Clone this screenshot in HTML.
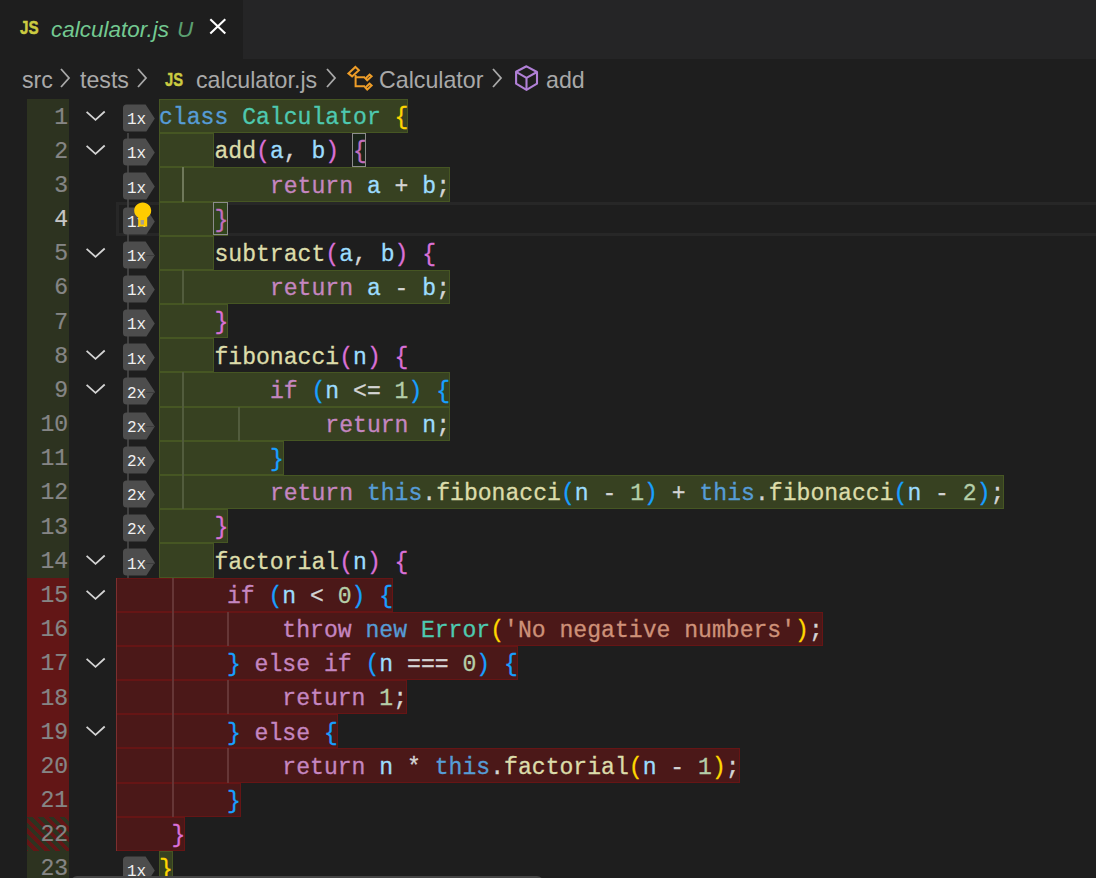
<!DOCTYPE html>
<html><head><meta charset="utf-8"><style>
html,body{margin:0;padding:0;}
body{width:1096px;height:878px;overflow:hidden;background:#1e1e1e;position:relative;font-family:"Liberation Sans",sans-serif;}
.a{position:absolute;}
.code{position:absolute;white-space:pre;font-family:"Liberation Mono",monospace;font-size:23.1px;line-height:34.18px;height:34.18px;-webkit-text-stroke:0.3px;}
.ln{position:absolute;left:0;width:68.2px;-webkit-text-stroke:0.2px;text-align:right;font-family:"Liberation Mono",monospace;font-size:23.1px;line-height:34.18px;color:#858585;}
.gb{position:absolute;left:27px;width:42px;}
.cg{background:#374121;border:1px solid #465623;box-sizing:border-box;}
.cr{background:#4b1818;border:1px solid #661515;box-sizing:border-box;}
.bd{position:absolute;left:123px;width:33px;height:28px;}
.bt{position:absolute;left:127px;font-family:"Liberation Mono",monospace;font-size:16px;color:#f0f0f0;line-height:28px;}
.bc{position:absolute;font-family:"Liberation Sans",sans-serif;font-size:23.2px;color:#a9a9a9;white-space:pre;line-height:40px;top:60px;}
</style></head><body>

<div class="a" style="left:0;top:0;width:1096px;height:59px;background:#252526"></div>
<div class="a" style="left:0;top:0;width:243px;height:59px;background:#1e1e1e"></div>
<div class="a" style="left:19.5px;top:16px;font-weight:bold;font-size:19px;color:#cbcb41;line-height:24px;transform:scaleX(0.8);transform-origin:0 0;-webkit-text-stroke:0.5px #cbcb41">JS</div>
<div class="a" style="left:51px;top:13.5px;font-style:italic;font-size:22.5px;color:#73c991;line-height:32px">calculator.js</div>
<div class="a" style="left:177px;top:13.5px;font-style:italic;font-size:22.5px;color:#5b9f70;line-height:32px">U</div>
<svg class="a" style="left:205px;top:13px" width="28" height="28" viewBox="0 0 28 28"><path d="M5.3 6.3 L20.3 20.5 M20.3 6.3 L5.3 20.5" stroke="#ffffff" stroke-width="2.1" fill="none"/></svg>
<div class="bc" style="left:22px">src</div>
<svg class="a" style="left:59px;top:66px" width="14" height="24" viewBox="0 0 14 24"><path d="M2 3 L10 12 L2 21" stroke="#a9a9a9" stroke-width="1.8" fill="none"/></svg>
<div class="bc" style="left:80px">tests</div>
<svg class="a" style="left:136px;top:66px" width="14" height="24" viewBox="0 0 14 24"><path d="M2 3 L10 12 L2 21" stroke="#a9a9a9" stroke-width="1.8" fill="none"/></svg>
<div class="a" style="left:165px;top:67.5px;font-weight:bold;font-size:18px;color:#cbcb41;line-height:24px;transform:scaleX(0.82);transform-origin:0 0;-webkit-text-stroke:0.4px #cbcb41">JS</div>
<div class="bc" style="left:196px">calculator.js</div>
<svg class="a" style="left:325px;top:66px" width="14" height="24" viewBox="0 0 14 24"><path d="M2 3 L10 12 L2 21" stroke="#a9a9a9" stroke-width="1.8" fill="none"/></svg>
<svg class="a" style="left:344px;top:63px" width="32" height="32" viewBox="0 0 32 32"><g fill="none" stroke="#ee9d28" stroke-width="2" stroke-linejoin="miter"><path d="M4.4 10.4 L11.4 3.9 L14.9 7.2 L8.1 13.4 Z"/><path d="M11.6 12 L11.6 23.2 L21 23.2 M11.6 14.2 L21 14.2"/><path d="M21.4 15.4 L25.6 11.5 L27.6 13.3 L23.2 17.3 Z"/><path d="M21.4 24.6 L25.6 20.7 L27.6 22.5 L23.2 26.5 Z"/></g></svg>
<div class="bc" style="left:379px">Calculator</div>
<svg class="a" style="left:491px;top:66px" width="14" height="24" viewBox="0 0 14 24"><path d="M2 3 L10 12 L2 21" stroke="#a9a9a9" stroke-width="1.8" fill="none"/></svg>
<svg class="a" style="left:510px;top:62px" width="32" height="32" viewBox="0 0 32 32"><g fill="none" stroke="#b180d7" stroke-width="2.1" stroke-linejoin="round"><path d="M16.5 4.3 L27 10 L27 21.7 L16.5 27.9 L6.1 21.7 L6.1 9.8 Z"/><path d="M6.1 9.8 L16.5 15.8 L27 10 M16.5 15.8 L16.5 27.9"/></g></svg>
<div class="bc" style="left:546px">add</div>
<div class="gb" style="top:99.00px;height:34.18px;background:#2d3320"></div>
<div class="gb" style="top:133.18px;height:34.18px;background:#2d3320"></div>
<div class="gb" style="top:167.36px;height:34.18px;background:#2d3320"></div>
<div class="gb" style="top:201.54px;height:34.18px;background:#2d3320"></div>
<div class="gb" style="top:235.72px;height:34.18px;background:#2d3320"></div>
<div class="gb" style="top:269.90px;height:34.18px;background:#2d3320"></div>
<div class="gb" style="top:304.08px;height:34.18px;background:#2d3320"></div>
<div class="gb" style="top:338.26px;height:34.18px;background:#2d3320"></div>
<div class="gb" style="top:372.44px;height:34.18px;background:#2d3320"></div>
<div class="gb" style="top:406.62px;height:34.18px;background:#2d3320"></div>
<div class="gb" style="top:440.80px;height:34.18px;background:#2d3320"></div>
<div class="gb" style="top:474.98px;height:34.18px;background:#2d3320"></div>
<div class="gb" style="top:509.16px;height:34.18px;background:#2d3320"></div>
<div class="gb" style="top:543.34px;height:34.18px;background:#2d3320"></div>
<div class="gb" style="top:577.52px;height:34.18px;background:#621616"></div>
<div class="gb" style="top:611.70px;height:34.18px;background:#621616"></div>
<div class="gb" style="top:645.88px;height:34.18px;background:#621616"></div>
<div class="gb" style="top:680.06px;height:34.18px;background:#621616"></div>
<div class="gb" style="top:714.24px;height:34.18px;background:#621616"></div>
<div class="gb" style="top:748.42px;height:34.18px;background:#621616"></div>
<div class="gb" style="top:782.60px;height:34.18px;background:#621616"></div>
<div class="gb" style="top:816.78px;height:34.18px;background:repeating-linear-gradient(45deg,#621616 0px,#621616 0.99px,#2d3320 0.99px,#2d3320 4.81px,#621616 4.81px,#621616 7.64px)"></div>
<div class="gb" style="top:850.96px;height:34.18px;background:#2d3320"></div>
<div class="a" style="left:116px;top:201.54px;width:980px;height:28.68px;border:3px solid #272727;border-right:none"></div>
<div class="ln" style="top:100.50px;color:#858585">1</div>
<div class="ln" style="top:134.68px;color:#858585">2</div>
<div class="ln" style="top:168.86px;color:#858585">3</div>
<div class="ln" style="top:203.04px;color:#c6c6c6">4</div>
<div class="ln" style="top:237.22px;color:#858585">5</div>
<div class="ln" style="top:271.40px;color:#858585">6</div>
<div class="ln" style="top:305.58px;color:#858585">7</div>
<div class="ln" style="top:339.76px;color:#858585">8</div>
<div class="ln" style="top:373.94px;color:#858585">9</div>
<div class="ln" style="top:408.12px;color:#858585">10</div>
<div class="ln" style="top:442.30px;color:#858585">11</div>
<div class="ln" style="top:476.48px;color:#858585">12</div>
<div class="ln" style="top:510.66px;color:#858585">13</div>
<div class="ln" style="top:544.84px;color:#858585">14</div>
<div class="ln" style="top:579.02px;color:#858585">15</div>
<div class="ln" style="top:613.20px;color:#858585">16</div>
<div class="ln" style="top:647.38px;color:#858585">17</div>
<div class="ln" style="top:681.56px;color:#858585">18</div>
<div class="ln" style="top:715.74px;color:#858585">19</div>
<div class="ln" style="top:749.92px;color:#858585">20</div>
<div class="ln" style="top:784.10px;color:#858585">21</div>
<div class="ln" style="top:818.28px;color:#858585">22</div>
<div class="ln" style="top:852.46px;color:#858585">23</div>
<svg class="a" style="left:82px;top:99.00px" width="28" height="34" viewBox="0 0 28 34"><path d="M4.6 12.9 L13.5 20.8 L22.7 12.5" stroke="#d4d4d4" stroke-width="1.8" fill="none"/></svg>
<svg class="a" style="left:82px;top:133.18px" width="28" height="34" viewBox="0 0 28 34"><path d="M4.6 12.9 L13.5 20.8 L22.7 12.5" stroke="#d4d4d4" stroke-width="1.8" fill="none"/></svg>
<svg class="a" style="left:82px;top:235.72px" width="28" height="34" viewBox="0 0 28 34"><path d="M4.6 12.9 L13.5 20.8 L22.7 12.5" stroke="#d4d4d4" stroke-width="1.8" fill="none"/></svg>
<svg class="a" style="left:82px;top:338.26px" width="28" height="34" viewBox="0 0 28 34"><path d="M4.6 12.9 L13.5 20.8 L22.7 12.5" stroke="#d4d4d4" stroke-width="1.8" fill="none"/></svg>
<svg class="a" style="left:82px;top:372.44px" width="28" height="34" viewBox="0 0 28 34"><path d="M4.6 12.9 L13.5 20.8 L22.7 12.5" stroke="#d4d4d4" stroke-width="1.8" fill="none"/></svg>
<svg class="a" style="left:82px;top:543.34px" width="28" height="34" viewBox="0 0 28 34"><path d="M4.6 12.9 L13.5 20.8 L22.7 12.5" stroke="#d4d4d4" stroke-width="1.8" fill="none"/></svg>
<svg class="a" style="left:82px;top:577.52px" width="28" height="34" viewBox="0 0 28 34"><path d="M4.6 12.9 L13.5 20.8 L22.7 12.5" stroke="#d4d4d4" stroke-width="1.8" fill="none"/></svg>
<svg class="a" style="left:82px;top:645.88px" width="28" height="34" viewBox="0 0 28 34"><path d="M4.6 12.9 L13.5 20.8 L22.7 12.5" stroke="#d4d4d4" stroke-width="1.8" fill="none"/></svg>
<svg class="a" style="left:82px;top:714.24px" width="28" height="34" viewBox="0 0 28 34"><path d="M4.6 12.9 L13.5 20.8 L22.7 12.5" stroke="#d4d4d4" stroke-width="1.8" fill="none"/></svg>
<div class="a" style="left:183.4px;top:167.36px;width:2px;height:34.18px;background:#707070;opacity:0.8"></div>
<div class="a" style="left:183.4px;top:269.90px;width:2px;height:34.18px;background:#404040;opacity:0.8"></div>
<div class="a" style="left:183.4px;top:372.44px;width:2px;height:34.18px;background:#404040;opacity:0.8"></div>
<div class="a" style="left:183.4px;top:406.62px;width:2px;height:34.18px;background:#404040;opacity:0.8"></div>
<div class="a" style="left:238.9px;top:406.62px;width:2px;height:34.18px;background:#404040;opacity:0.8"></div>
<div class="a" style="left:183.4px;top:440.80px;width:2px;height:34.18px;background:#404040;opacity:0.8"></div>
<div class="a" style="left:183.4px;top:474.98px;width:2px;height:34.18px;background:#404040;opacity:0.8"></div>
<div class="a" style="left:116.0px;top:577.52px;width:2px;height:34.18px;background:#404040;opacity:0.8"></div>
<div class="a" style="left:171.4px;top:577.52px;width:2px;height:34.18px;background:#404040;opacity:0.8"></div>
<div class="a" style="left:116.0px;top:611.70px;width:2px;height:34.18px;background:#404040;opacity:0.8"></div>
<div class="a" style="left:171.4px;top:611.70px;width:2px;height:34.18px;background:#404040;opacity:0.8"></div>
<div class="a" style="left:226.9px;top:611.70px;width:2px;height:34.18px;background:#404040;opacity:0.8"></div>
<div class="a" style="left:116.0px;top:645.88px;width:2px;height:34.18px;background:#404040;opacity:0.8"></div>
<div class="a" style="left:171.4px;top:645.88px;width:2px;height:34.18px;background:#404040;opacity:0.8"></div>
<div class="a" style="left:116.0px;top:680.06px;width:2px;height:34.18px;background:#404040;opacity:0.8"></div>
<div class="a" style="left:171.4px;top:680.06px;width:2px;height:34.18px;background:#404040;opacity:0.8"></div>
<div class="a" style="left:226.9px;top:680.06px;width:2px;height:34.18px;background:#404040;opacity:0.8"></div>
<div class="a" style="left:116.0px;top:714.24px;width:2px;height:34.18px;background:#404040;opacity:0.8"></div>
<div class="a" style="left:171.4px;top:714.24px;width:2px;height:34.18px;background:#404040;opacity:0.8"></div>
<div class="a" style="left:116.0px;top:748.42px;width:2px;height:34.18px;background:#404040;opacity:0.8"></div>
<div class="a" style="left:171.4px;top:748.42px;width:2px;height:34.18px;background:#404040;opacity:0.8"></div>
<div class="a" style="left:226.9px;top:748.42px;width:2px;height:34.18px;background:#404040;opacity:0.8"></div>
<div class="a" style="left:116.0px;top:782.60px;width:2px;height:34.18px;background:#404040;opacity:0.8"></div>
<div class="a" style="left:171.4px;top:782.60px;width:2px;height:34.18px;background:#404040;opacity:0.8"></div>
<div class="a" style="left:116.0px;top:816.78px;width:2px;height:34.18px;background:#404040;opacity:0.8"></div>
<div class="a" style="left:126.7px;top:133.18px;width:2px;height:444.34px;background:#404040"></div>
<div class="a cg" style="left:159.00px;top:99.00px;width:249.48px;height:34.18px"></div>
<div class="a cg" style="left:159.00px;top:133.18px;width:55.44px;height:34.18px"></div>
<div class="a cg" style="left:159.00px;top:167.36px;width:291.06px;height:34.18px"></div>
<div class="a cg" style="left:159.00px;top:201.54px;width:69.30px;height:34.18px"></div>
<div class="a cg" style="left:159.00px;top:235.72px;width:55.44px;height:34.18px"></div>
<div class="a cg" style="left:159.00px;top:269.90px;width:291.06px;height:34.18px"></div>
<div class="a cg" style="left:159.00px;top:304.08px;width:69.30px;height:34.18px"></div>
<div class="a cg" style="left:159.00px;top:338.26px;width:55.44px;height:34.18px"></div>
<div class="a cg" style="left:159.00px;top:372.44px;width:291.06px;height:34.18px"></div>
<div class="a cg" style="left:159.00px;top:406.62px;width:291.06px;height:34.18px"></div>
<div class="a cg" style="left:159.00px;top:440.80px;width:124.74px;height:34.18px"></div>
<div class="a cg" style="left:159.00px;top:474.98px;width:845.46px;height:34.18px"></div>
<div class="a cg" style="left:159.00px;top:509.16px;width:69.30px;height:34.18px"></div>
<div class="a cg" style="left:159.00px;top:543.34px;width:55.44px;height:34.18px"></div>
<div class="a cr" style="left:116.00px;top:577.52px;width:277.20px;height:34.18px"></div>
<div class="a cr" style="left:116.00px;top:611.70px;width:706.86px;height:34.18px"></div>
<div class="a cr" style="left:116.00px;top:645.88px;width:401.94px;height:34.18px"></div>
<div class="a cr" style="left:116.00px;top:680.06px;width:291.06px;height:34.18px"></div>
<div class="a cr" style="left:116.00px;top:714.24px;width:221.76px;height:34.18px"></div>
<div class="a cr" style="left:116.00px;top:748.42px;width:623.70px;height:34.18px"></div>
<div class="a cr" style="left:116.00px;top:782.60px;width:124.74px;height:34.18px"></div>
<div class="a cr" style="left:116.00px;top:816.78px;width:69.30px;height:34.18px"></div>
<div class="a cg" style="left:159.00px;top:850.96px;width:13.86px;height:34.18px"></div>
<div class="a" style="left:182.0px;top:167.36px;width:2px;height:34.18px;background:#6f785a"></div>
<div class="a" style="left:182.0px;top:269.90px;width:2px;height:34.18px;background:#525c3d"></div>
<div class="a" style="left:182.0px;top:372.44px;width:2px;height:34.18px;background:#525c3d"></div>
<div class="a" style="left:182.0px;top:406.62px;width:2px;height:34.18px;background:#525c3d"></div>
<div class="a" style="left:238.0px;top:406.62px;width:2px;height:34.18px;background:#525c3d"></div>
<div class="a" style="left:182.0px;top:440.80px;width:2px;height:34.18px;background:#525c3d"></div>
<div class="a" style="left:182.0px;top:474.98px;width:2px;height:34.18px;background:#525c3d"></div>
<div class="a" style="left:171.5px;top:577.52px;width:2px;height:34.18px;background:#663636"></div>
<div class="a" style="left:116px;top:577.52px;width:1px;height:34.18px;background:#7d2f2f"></div>
<div class="a" style="left:171.5px;top:611.70px;width:2px;height:34.18px;background:#663636"></div>
<div class="a" style="left:227.1px;top:611.70px;width:2px;height:34.18px;background:#663636"></div>
<div class="a" style="left:116px;top:611.70px;width:1px;height:34.18px;background:#7d2f2f"></div>
<div class="a" style="left:171.5px;top:645.88px;width:2px;height:34.18px;background:#663636"></div>
<div class="a" style="left:116px;top:645.88px;width:1px;height:34.18px;background:#7d2f2f"></div>
<div class="a" style="left:171.5px;top:680.06px;width:2px;height:34.18px;background:#663636"></div>
<div class="a" style="left:227.1px;top:680.06px;width:2px;height:34.18px;background:#663636"></div>
<div class="a" style="left:116px;top:680.06px;width:1px;height:34.18px;background:#7d2f2f"></div>
<div class="a" style="left:171.5px;top:714.24px;width:2px;height:34.18px;background:#663636"></div>
<div class="a" style="left:116px;top:714.24px;width:1px;height:34.18px;background:#7d2f2f"></div>
<div class="a" style="left:171.5px;top:748.42px;width:2px;height:34.18px;background:#663636"></div>
<div class="a" style="left:227.1px;top:748.42px;width:2px;height:34.18px;background:#663636"></div>
<div class="a" style="left:116px;top:748.42px;width:1px;height:34.18px;background:#7d2f2f"></div>
<div class="a" style="left:171.5px;top:782.60px;width:2px;height:34.18px;background:#663636"></div>
<div class="a" style="left:116px;top:782.60px;width:1px;height:34.18px;background:#7d2f2f"></div>
<div class="a" style="left:116px;top:816.78px;width:1px;height:34.18px;background:#7d2f2f"></div>
<svg class="a" style="left:122px;top:104.00px" width="35" height="29" viewBox="0 0 35 29"><path d="M4.6 0.5 L23.6 0.5 L32.8 14.4 L24.4 27.6 L4.6 27.6 Q1 27.6 1 24 L1 4.1 Q1 0.5 4.6 0.5 Z" fill="#4d4d4d"/></svg>
<div class="bt" style="top:106.30px">1x</div>
<svg class="a" style="left:122px;top:138.18px" width="35" height="29" viewBox="0 0 35 29"><path d="M4.6 0.5 L23.6 0.5 L32.8 14.4 L24.4 27.6 L4.6 27.6 Q1 27.6 1 24 L1 4.1 Q1 0.5 4.6 0.5 Z" fill="#4d4d4d"/></svg>
<div class="bt" style="top:140.48px">1x</div>
<svg class="a" style="left:122px;top:172.36px" width="35" height="29" viewBox="0 0 35 29"><path d="M4.6 0.5 L23.6 0.5 L32.8 14.4 L24.4 27.6 L4.6 27.6 Q1 27.6 1 24 L1 4.1 Q1 0.5 4.6 0.5 Z" fill="#4d4d4d"/></svg>
<div class="bt" style="top:174.66px">1x</div>
<svg class="a" style="left:122px;top:206.54px" width="35" height="29" viewBox="0 0 35 29"><path d="M4.6 0.5 L23.6 0.5 L32.8 14.4 L24.4 27.6 L4.6 27.6 Q1 27.6 1 24 L1 4.1 Q1 0.5 4.6 0.5 Z" fill="#4d4d4d"/></svg>
<div class="bt" style="top:208.84px">1x</div>
<svg class="a" style="left:122px;top:240.72px" width="35" height="29" viewBox="0 0 35 29"><path d="M4.6 0.5 L23.6 0.5 L32.8 14.4 L24.4 27.6 L4.6 27.6 Q1 27.6 1 24 L1 4.1 Q1 0.5 4.6 0.5 Z" fill="#4d4d4d"/></svg>
<div class="bt" style="top:243.02px">1x</div>
<div class="a" style="left:146px;top:254.92px;width:9px;height:1px;background:#3c3c3c"></div>
<svg class="a" style="left:122px;top:274.90px" width="35" height="29" viewBox="0 0 35 29"><path d="M4.6 0.5 L23.6 0.5 L32.8 14.4 L24.4 27.6 L4.6 27.6 Q1 27.6 1 24 L1 4.1 Q1 0.5 4.6 0.5 Z" fill="#4d4d4d"/></svg>
<div class="bt" style="top:277.20px">1x</div>
<svg class="a" style="left:122px;top:309.08px" width="35" height="29" viewBox="0 0 35 29"><path d="M4.6 0.5 L23.6 0.5 L32.8 14.4 L24.4 27.6 L4.6 27.6 Q1 27.6 1 24 L1 4.1 Q1 0.5 4.6 0.5 Z" fill="#4d4d4d"/></svg>
<div class="bt" style="top:311.38px">1x</div>
<svg class="a" style="left:122px;top:343.26px" width="35" height="29" viewBox="0 0 35 29"><path d="M4.6 0.5 L23.6 0.5 L32.8 14.4 L24.4 27.6 L4.6 27.6 Q1 27.6 1 24 L1 4.1 Q1 0.5 4.6 0.5 Z" fill="#4d4d4d"/></svg>
<div class="bt" style="top:345.56px">1x</div>
<svg class="a" style="left:122px;top:377.44px" width="35" height="29" viewBox="0 0 35 29"><path d="M4.6 0.5 L23.6 0.5 L32.8 14.4 L24.4 27.6 L4.6 27.6 Q1 27.6 1 24 L1 4.1 Q1 0.5 4.6 0.5 Z" fill="#4d4d4d"/></svg>
<div class="bt" style="top:379.74px">2x</div>
<div class="a" style="left:146px;top:391.64px;width:9px;height:1px;background:#3c3c3c"></div>
<svg class="a" style="left:122px;top:411.62px" width="35" height="29" viewBox="0 0 35 29"><path d="M4.6 0.5 L23.6 0.5 L32.8 14.4 L24.4 27.6 L4.6 27.6 Q1 27.6 1 24 L1 4.1 Q1 0.5 4.6 0.5 Z" fill="#4d4d4d"/></svg>
<div class="bt" style="top:413.92px">2x</div>
<div class="a" style="left:146px;top:425.82px;width:9px;height:1px;background:#3c3c3c"></div>
<svg class="a" style="left:122px;top:445.80px" width="35" height="29" viewBox="0 0 35 29"><path d="M4.6 0.5 L23.6 0.5 L32.8 14.4 L24.4 27.6 L4.6 27.6 Q1 27.6 1 24 L1 4.1 Q1 0.5 4.6 0.5 Z" fill="#4d4d4d"/></svg>
<div class="bt" style="top:448.10px">2x</div>
<svg class="a" style="left:122px;top:479.98px" width="35" height="29" viewBox="0 0 35 29"><path d="M4.6 0.5 L23.6 0.5 L32.8 14.4 L24.4 27.6 L4.6 27.6 Q1 27.6 1 24 L1 4.1 Q1 0.5 4.6 0.5 Z" fill="#4d4d4d"/></svg>
<div class="bt" style="top:482.28px">2x</div>
<svg class="a" style="left:122px;top:514.16px" width="35" height="29" viewBox="0 0 35 29"><path d="M4.6 0.5 L23.6 0.5 L32.8 14.4 L24.4 27.6 L4.6 27.6 Q1 27.6 1 24 L1 4.1 Q1 0.5 4.6 0.5 Z" fill="#4d4d4d"/></svg>
<div class="bt" style="top:516.46px">2x</div>
<svg class="a" style="left:122px;top:548.34px" width="35" height="29" viewBox="0 0 35 29"><path d="M4.6 0.5 L23.6 0.5 L32.8 14.4 L24.4 27.6 L4.6 27.6 Q1 27.6 1 24 L1 4.1 Q1 0.5 4.6 0.5 Z" fill="#4d4d4d"/></svg>
<div class="bt" style="top:550.64px">1x</div>
<div class="a" style="left:146px;top:562.54px;width:9px;height:1px;background:#3c3c3c"></div>
<svg class="a" style="left:122px;top:855.96px" width="35" height="29" viewBox="0 0 35 29"><path d="M4.6 0.5 L23.6 0.5 L32.8 14.4 L24.4 27.6 L4.6 27.6 Q1 27.6 1 24 L1 4.1 Q1 0.5 4.6 0.5 Z" fill="#4d4d4d"/></svg>
<div class="bt" style="top:858.26px">1x</div>
<div class="code" style="left:159.00px;top:101.30px"><span style="color:#569cd6">class </span><span style="color:#4ec9b0">Calculator </span><span style="color:#ffd700">{</span></div>
<div class="code" style="left:159.00px;top:135.48px"><span style="color:#d4d4d4">    </span><span style="color:#dcdcaa">add</span><span style="color:#da70d6">(</span><span style="color:#9cdcfe">a</span><span style="color:#d4d4d4">, </span><span style="color:#9cdcfe">b</span><span style="color:#da70d6">)</span><span style="color:#d4d4d4"> </span><span style="color:#da70d6">{</span></div>
<div class="code" style="left:159.00px;top:169.66px"><span style="color:#d4d4d4">        </span><span style="color:#c586c0">return </span><span style="color:#9cdcfe">a</span><span style="color:#d4d4d4"> + </span><span style="color:#9cdcfe">b</span><span style="color:#d4d4d4">;</span></div>
<div class="code" style="left:159.00px;top:203.84px"><span style="color:#d4d4d4">    </span><span style="color:#da70d6">}</span></div>
<div class="code" style="left:159.00px;top:238.02px"><span style="color:#d4d4d4">    </span><span style="color:#dcdcaa">subtract</span><span style="color:#da70d6">(</span><span style="color:#9cdcfe">a</span><span style="color:#d4d4d4">, </span><span style="color:#9cdcfe">b</span><span style="color:#da70d6">)</span><span style="color:#d4d4d4"> </span><span style="color:#da70d6">{</span></div>
<div class="code" style="left:159.00px;top:272.20px"><span style="color:#d4d4d4">        </span><span style="color:#c586c0">return </span><span style="color:#9cdcfe">a</span><span style="color:#d4d4d4"> - </span><span style="color:#9cdcfe">b</span><span style="color:#d4d4d4">;</span></div>
<div class="code" style="left:159.00px;top:306.38px"><span style="color:#d4d4d4">    </span><span style="color:#da70d6">}</span></div>
<div class="code" style="left:159.00px;top:340.56px"><span style="color:#d4d4d4">    </span><span style="color:#dcdcaa">fibonacci</span><span style="color:#da70d6">(</span><span style="color:#9cdcfe">n</span><span style="color:#da70d6">)</span><span style="color:#d4d4d4"> </span><span style="color:#da70d6">{</span></div>
<div class="code" style="left:159.00px;top:374.74px"><span style="color:#d4d4d4">        </span><span style="color:#c586c0">if </span><span style="color:#179fff">(</span><span style="color:#9cdcfe">n</span><span style="color:#d4d4d4"> &lt;= </span><span style="color:#b5cea8">1</span><span style="color:#179fff">)</span><span style="color:#d4d4d4"> </span><span style="color:#179fff">{</span></div>
<div class="code" style="left:159.00px;top:408.92px"><span style="color:#d4d4d4">            </span><span style="color:#c586c0">return </span><span style="color:#9cdcfe">n</span><span style="color:#d4d4d4">;</span></div>
<div class="code" style="left:159.00px;top:443.10px"><span style="color:#d4d4d4">        </span><span style="color:#179fff">}</span></div>
<div class="code" style="left:159.00px;top:477.28px"><span style="color:#d4d4d4">        </span><span style="color:#c586c0">return </span><span style="color:#569cd6">this</span><span style="color:#d4d4d4">.</span><span style="color:#dcdcaa">fibonacci</span><span style="color:#179fff">(</span><span style="color:#9cdcfe">n</span><span style="color:#d4d4d4"> - </span><span style="color:#b5cea8">1</span><span style="color:#179fff">)</span><span style="color:#d4d4d4"> + </span><span style="color:#569cd6">this</span><span style="color:#d4d4d4">.</span><span style="color:#dcdcaa">fibonacci</span><span style="color:#179fff">(</span><span style="color:#9cdcfe">n</span><span style="color:#d4d4d4"> - </span><span style="color:#b5cea8">2</span><span style="color:#179fff">)</span><span style="color:#d4d4d4">;</span></div>
<div class="code" style="left:159.00px;top:511.46px"><span style="color:#d4d4d4">    </span><span style="color:#da70d6">}</span></div>
<div class="code" style="left:159.00px;top:545.64px"><span style="color:#d4d4d4">    </span><span style="color:#dcdcaa">factorial</span><span style="color:#da70d6">(</span><span style="color:#9cdcfe">n</span><span style="color:#da70d6">)</span><span style="color:#d4d4d4"> </span><span style="color:#da70d6">{</span></div>
<div class="code" style="left:116.00px;top:579.82px"><span style="color:#d4d4d4">        </span><span style="color:#c586c0">if </span><span style="color:#179fff">(</span><span style="color:#9cdcfe">n</span><span style="color:#d4d4d4"> &lt; </span><span style="color:#b5cea8">0</span><span style="color:#179fff">)</span><span style="color:#d4d4d4"> </span><span style="color:#179fff">{</span></div>
<div class="code" style="left:116.00px;top:614.00px"><span style="color:#d4d4d4">            </span><span style="color:#c586c0">throw </span><span style="color:#569cd6">new </span><span style="color:#4ec9b0">Error</span><span style="color:#ffd700">(</span><span style="color:#ce9178">'No negative numbers'</span><span style="color:#ffd700">)</span><span style="color:#d4d4d4">;</span></div>
<div class="code" style="left:116.00px;top:648.18px"><span style="color:#d4d4d4">        </span><span style="color:#179fff">}</span><span style="color:#d4d4d4"> </span><span style="color:#c586c0">else </span><span style="color:#c586c0">if </span><span style="color:#179fff">(</span><span style="color:#9cdcfe">n</span><span style="color:#d4d4d4"> === </span><span style="color:#b5cea8">0</span><span style="color:#179fff">)</span><span style="color:#d4d4d4"> </span><span style="color:#179fff">{</span></div>
<div class="code" style="left:116.00px;top:682.36px"><span style="color:#d4d4d4">            </span><span style="color:#c586c0">return </span><span style="color:#b5cea8">1</span><span style="color:#d4d4d4">;</span></div>
<div class="code" style="left:116.00px;top:716.54px"><span style="color:#d4d4d4">        </span><span style="color:#179fff">}</span><span style="color:#d4d4d4"> </span><span style="color:#c586c0">else </span><span style="color:#179fff">{</span></div>
<div class="code" style="left:116.00px;top:750.72px"><span style="color:#d4d4d4">            </span><span style="color:#c586c0">return </span><span style="color:#9cdcfe">n</span><span style="color:#d4d4d4"> * </span><span style="color:#569cd6">this</span><span style="color:#d4d4d4">.</span><span style="color:#dcdcaa">factorial</span><span style="color:#ffd700">(</span><span style="color:#9cdcfe">n</span><span style="color:#d4d4d4"> - </span><span style="color:#b5cea8">1</span><span style="color:#ffd700">)</span><span style="color:#d4d4d4">;</span></div>
<div class="code" style="left:116.00px;top:784.90px"><span style="color:#d4d4d4">        </span><span style="color:#179fff">}</span></div>
<div class="code" style="left:116.00px;top:819.08px"><span style="color:#d4d4d4">    </span><span style="color:#da70d6">}</span></div>
<div class="code" style="left:159.00px;top:853.26px"><span style="color:#ffd700">}</span></div>
<div class="a" style="left:351.54px;top:133.18px;width:12.86px;height:31.68px;border:1.5px solid #8c8c8c;background:rgba(0,100,0,0.1)"></div>
<div class="a" style="left:212.94px;top:201.54px;width:12.86px;height:31.68px;border:1.5px solid #8c8c8c;background:rgba(0,100,0,0.1)"></div>
<svg class="a" style="left:132px;top:202.04px" width="22" height="28" viewBox="0 0 22 28"><path d="M10.7 0.5 C15.6 0.5 19.2 4.1 19.2 8.8 C19.2 12 17.5 14 15.2 15.6 L15.2 24.5 L6.2 24.5 L6.2 15.6 C3.9 14 2.2 12 2.2 8.8 C2.2 4.1 5.8 0.5 10.7 0.5 Z" fill="#ffcc00"/><rect x="8.6" y="18" width="3.4" height="4.6" fill="#a99f8c"/></svg>
<div class="a" style="left:71px;top:876px;width:468px;height:20px;border:2px solid #454545;border-radius:6px;background:#252526"></div>
</body></html>
